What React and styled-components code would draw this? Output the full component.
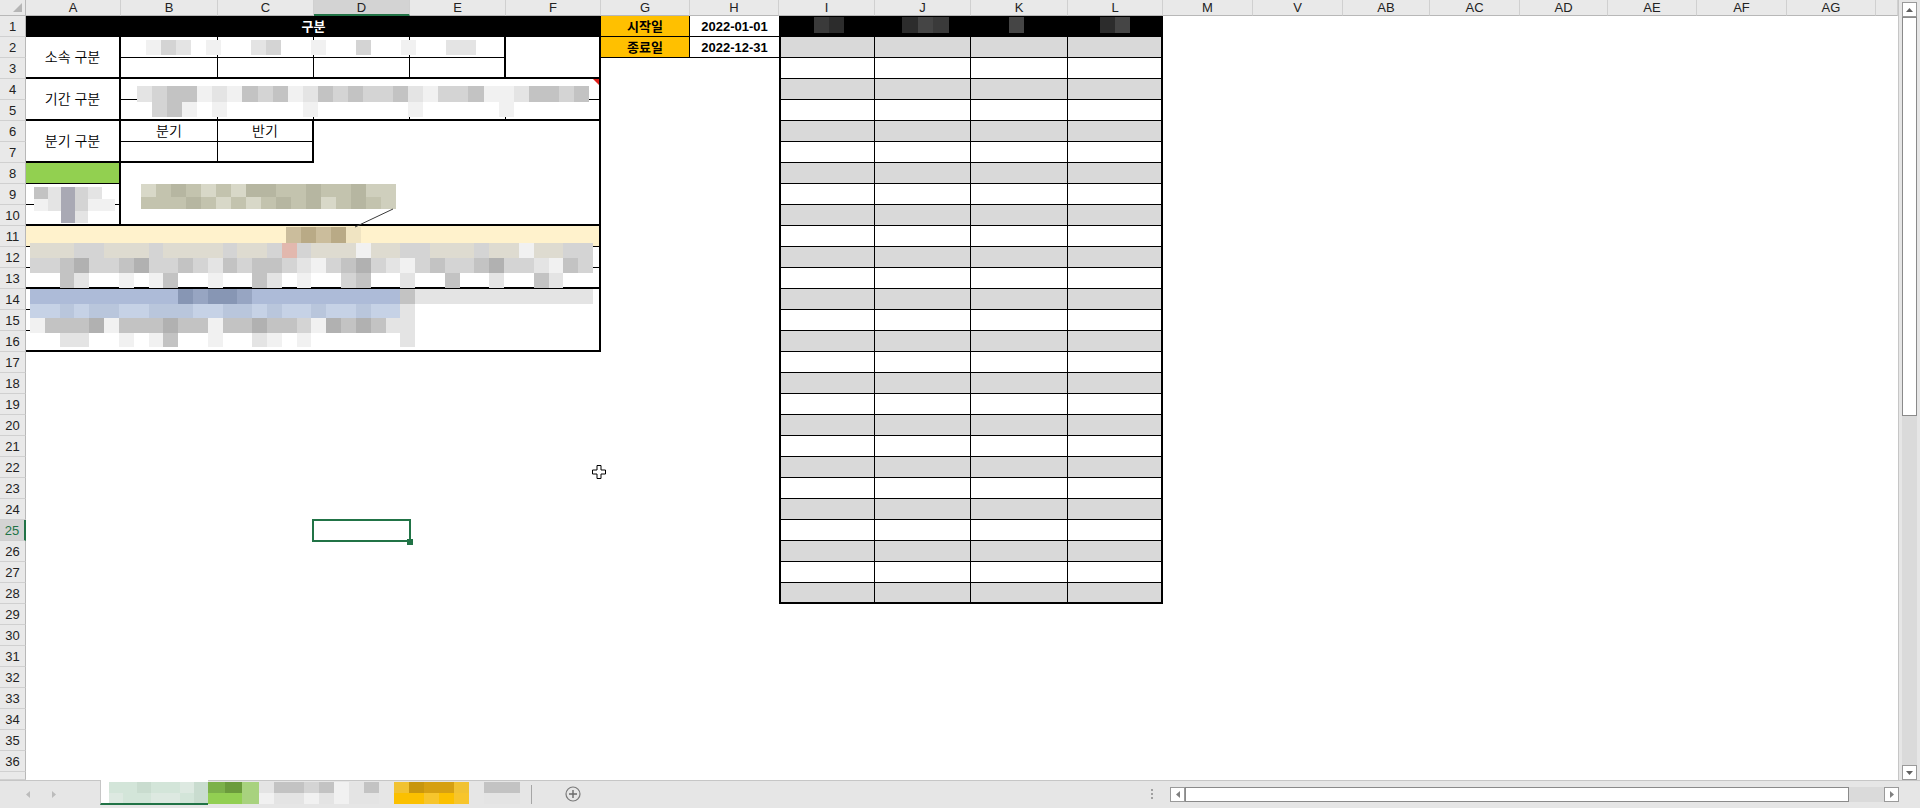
import React from "react";
import styled, { createGlobalStyle } from "styled-components";

const GlobalStyle = createGlobalStyle`
  html, body {
    margin: 0;
    padding: 0;
    background: #fff;
    overflow: hidden;
  }
  body {
    font-family: "Liberation Sans", "Noto Sans CJK KR", sans-serif;
  }
`;

// visible columns, last one is the clipped AH
const COLS = ["A", "B", "C", "D", "E", "F", "G", "H", "I", "J", "K", "L", "M", "V", "AB", "AC", "AD", "AE", "AF", "AG", ""];
const WIDTHS = [95, 97, 96, 96, 96, 95, 89, 89, 96, 96, 97, 95, 90, 90, 87, 90, 88, 89, 90, 89];
const ROWS = 36;

const colIndex = (letter) => COLS.indexOf(letter) + 2;

// "B8:F10" -> grid placement props
const area = (ref) => {
    const [a, b = a] = ref.split(":");
    const parse = (s) => {
        const m = s.match(/^([A-Z]+)(\d+)$/);
        return [colIndex(m[1]), Number(m[2]) + 1];
    };
    const [c1, r1] = parse(a);
    const [c2, r2] = parse(b);
    return { $col: `${c1} / ${c2 + 1}`, $row: `${r1} / ${r2 + 1}` };
};

const PAL = {
    w: "#f1f1f1", l: "#e4e4e4", m: "#d4d4d4", g: "#c3c3c3", d: "#b1b1b1", a: "#a9a9b4",
    e: "#dedbd0", r: "#e2b8ae",
    o: "#cfcfbd", O: "#b6b6a1", p: "#c3c3ae", q: "#d8d8c8",
    t: "#cbbd9c", T: "#b9aa86", y: "#f0e4c2",
    b: "#adbbd8", B: "#8796b4", v: "#97a5c2", c: "#c6d2e6", k: "#b9c6dc",
    x: "#3a3a3a", X: "#2c2c2c", z: "#454545",
    n: "#d3e5d9", N: "#dde9e1", s: "#c9dccf",
    G: "#7cb14a", H: "#6b9b3c", h: "#a8d27e", i: "#92cf52",
    Y: "#f1c232", U: "#c8960e", u: "#d6a012", f: "#fbc000", F: "#f7c52c",
};

const line = (w) => (w ? `${w}px solid #000` : "none");

const Page = styled.div`
    width: 1920px;
    height: 808px;
    display: flex;
    flex-direction: column;
    overflow: hidden;
`;

const Workspace = styled.div`
    display: flex;
    height: 780px;
`;

const Sheet = styled.div`
    flex: 1;
    position: relative;
    display: grid;
    grid-template-columns: 26px ${WIDTHS.map((w) => w + "px").join(" ")} 1fr;
    grid-template-rows: 16px repeat(${ROWS}, 21px) 1fr;
    overflow: hidden;
    background: #fff;
`;

const Corner = styled.div`
    grid-row: 1;
    grid-column: 1;
    position: relative;
    box-sizing: border-box;
    background: #e9e9e9;
    border-right: 1px solid #b8b8b8;
    border-bottom: 1px solid #b8b8b8;
    &::after {
        content: "";
        position: absolute;
        right: 3px;
        bottom: 3px;
        border-left: 9px solid transparent;
        border-bottom: 9px solid #b5b5b5;
    }
`;

const ColHead = styled.div`
    grid-row: 1;
    grid-column: ${(p) => p.$col};
    box-sizing: border-box;
    display: flex;
    align-items: center;
    justify-content: center;
    background: ${(p) => (p.$active ? "#d3d3d3" : "#e9e9e9")};
    border-right: 1px solid #d0d0d0;
    border-bottom: ${(p) => (p.$active ? "2px solid #217346" : "1px solid #b8b8b8")};
    font-size: 13px;
    color: #222;
    overflow: hidden;
`;

const RowHead = styled.div`
    grid-column: 1;
    grid-row: ${(p) => p.$row};
    box-sizing: border-box;
    display: flex;
    align-items: center;
    justify-content: center;
    background: ${(p) => (p.$active ? "#d3d3d3" : "#e9e9e9")};
    border-bottom: 1px solid #d0d0d0;
    border-right: ${(p) => (p.$active ? "2px solid #217346" : "1px solid #b8b8b8")};
    color: ${(p) => (p.$active ? "#217346" : "#222")};
    font-size: 13px;
    overflow: hidden;
`;

const Cell = styled.div`
    grid-column: ${(p) => p.$col};
    grid-row: ${(p) => p.$row};
    position: relative;
    box-sizing: border-box;
    display: flex;
    align-items: center;
    justify-content: center;
    background: ${(p) => p.$bg || "transparent"};
    border-top: ${(p) => line(p.$t)};
    border-right: ${(p) => line(p.$r)};
    border-bottom: ${(p) => line(p.$b)};
    border-left: ${(p) => line(p.$l)};
    font-size: ${(p) => (p.$bold ? 13 : 14)}px;
    line-height: 1;
    font-weight: ${(p) => (p.$bold ? 700 : 350)};
    color: ${(p) => p.$color || "#000"};
    white-space: nowrap;
    overflow: hidden;

    ${(p) => p.$note && `
        &::after {
            content: "";
            position: absolute;
            top: 0;
            right: 0;
            border-left: 6px solid transparent;
            border-top: 6px solid #e0201a;
        }
    `}
`;

const MosaicGrid = styled.div`
    grid-column: ${(p) => p.$col || "auto"};
    grid-row: ${(p) => p.$row || "auto"};
    align-self: start;
    justify-self: start;
    flex-shrink: 0;
    margin: ${(p) => p.$y || 0}px 0 0 ${(p) => p.$x || 0}px;
    width: ${(p) => p.$w}px;
    height: ${(p) => p.$h}px;
    display: grid;
    grid-template-columns: repeat(${(p) => p.$cols}, 1fr);
    grid-template-rows: repeat(${(p) => p.$rows}, 1fr);
    z-index: 2;
    pointer-events: none;
`;

const Block = styled.span`
    background: ${(p) => p.$c};
`;

const CalloutLayer = styled.div`
    grid-column: ${(p) => p.$col};
    grid-row: ${(p) => p.$row};
    z-index: 2;
    pointer-events: none;
    svg {
        display: block;
        overflow: visible;
    }
`;

const Selection = styled.div`
    grid-column: ${(p) => p.$col};
    grid-row: ${(p) => p.$row};
    margin: -1px -1px -1px -2px;
    border: 2px solid #217346;
    position: relative;
    z-index: 3;
`;

const FillHandle = styled.div`
    position: absolute;
    right: -4px;
    bottom: -5px;
    width: 6px;
    height: 6px;
    background: #217346;
`;

const Cursor = styled.svg`
    position: absolute;
    left: 592px;
    top: 465px;
    z-index: 5;
`;

const VScroll = styled.div`
    width: 22px;
    box-sizing: border-box;
    border-left: 1px solid #c6c6c6;
    background: #e6e6e6;
    display: flex;
    flex-direction: column;
    padding: 2px 3px 0 3px;
`;

const ScrollBtn = styled.div`
    flex: 0 0 15px;
    height: 15px;
    width: ${(p) => (p.$h ? "15px" : "auto")};
    box-sizing: border-box;
    background: #fff;
    border: 1px solid #9a9a9a;
    display: flex;
    align-items: center;
    justify-content: center;
`;

const Thumb = styled.div`
    flex: 0 0 ${(p) => p.$size}px;
    box-sizing: border-box;
    background: #fff;
    border: 1px solid #8a8a8a;
`;

const Track = styled.div`
    flex: 1;
    background: #dadada;
`;

const TabBar = styled.div`
    height: 28px;
    box-sizing: border-box;
    display: flex;
    align-items: flex-start;
    background: #e6e6e6;
    border-top: 1px solid #c6c6c6;
`;

const NavArea = styled.div`
    width: 100px;
    height: 27px;
    flex-shrink: 0;
    display: flex;
    align-items: center;
    gap: 22px;
    padding-left: 26px;
    box-sizing: border-box;
`;

const ActiveTab = styled.div`
    width: 108px;
    height: 25px;
    flex-shrink: 0;
    margin-top: -1px;
    box-sizing: border-box;
    background: #fff;
    border-left: 1px solid #c6c6c6;
    border-bottom: 2px solid #217346;
    padding: 2px 0 0 8px;
`;

const TabSep = styled.div`
    width: 1px;
    height: 19px;
    flex-shrink: 0;
    margin: 4px 0 0 11px;
    background: #a6a6a6;
`;

const AddSheet = styled.svg`
    flex-shrink: 0;
    margin: 5px 0 0 33px;
`;

const Spacer = styled.div`
    flex: 1;
`;

const Dots = styled.div`
    width: 2px;
    flex-shrink: 0;
    margin-top: 8px;
    display: flex;
    flex-direction: column;
    gap: 2px;
    span {
        width: 2px;
        height: 2px;
        background: #a0a0a0;
    }
`;

const HScroll = styled.div`
    width: 729px;
    height: 15px;
    flex-shrink: 0;
    margin: 6px 0 0 17px;
    display: flex;
`;

const HCorner = styled.div`
    width: 21px;
    flex-shrink: 0;
`;

function Mosaic({ at, x, y, w, h, rows, cols }) {
    const n = cols || Math.max(...rows.map((r) => r.length));
    const place = at ? area(at) : {};
    return (
        <MosaicGrid {...place} $x={x} $y={y} $w={w} $h={h} $cols={n} $rows={rows.length}>
            {rows.flatMap((r, i) =>
                Array.from({ length: n }, (_, j) => <Block key={i + "-" + j} $c={PAL[r[j]] || "transparent"} />)
            )}
        </MosaicGrid>
    );
}

const CELLS = [
    { at: "A1:F1", bg: "#000", color: "#fff", bold: true, text: "구분" },
    { at: "G1", bg: "#ffc000", bold: true, text: "시작일", r: 1, b: 1 },
    { at: "H1", bold: true, text: "2022-01-01", b: 1 },
    { at: "G2", bg: "#ffc000", bold: true, text: "종료일", r: 1, b: 1 },
    { at: "H2", bold: true, text: "2022-12-31", b: 1 },

    { at: "A2:A3", text: "소속 구분", r: 2, b: 2 },
    { at: "B2", r: 1, b: 1 }, { at: "C2", r: 1, b: 1 }, { at: "D2", r: 1, b: 1 }, { at: "E2", r: 2, b: 1 },
    { at: "B3", r: 1, b: 2 }, { at: "C3", r: 1, b: 2 }, { at: "D3", r: 1, b: 2 }, { at: "E3", r: 2, b: 2 },
    { at: "F2:F3", r: 2, b: 2 },

    { at: "A4:A5", text: "기간 구분", r: 2, b: 2 },
    { at: "B4:E4", b: 1 }, { at: "F4", r: 2, b: 1, note: true },
    { at: "B5", r: 1, b: 2 }, { at: "C5", r: 1, b: 2 }, { at: "D5", r: 1, b: 2 }, { at: "E5", r: 1, b: 2 },
    { at: "F5", r: 2, b: 2 },

    { at: "A6:A7", text: "분기 구분", r: 2, b: 2 },
    { at: "B6", text: "분기", r: 1, b: 1 }, { at: "C6", text: "반기", r: 2, b: 1 },
    { at: "B7", r: 1, b: 2 }, { at: "C7", r: 2, b: 2 },
    { at: "D6:F7", r: 2 },

    { at: "A8", bg: "#92d050", r: 2, b: 1 },
    { at: "A9", r: 2, b: 1 }, { at: "A10", r: 2, b: 2 },
    { at: "B8:F10", r: 2, b: 2 },
    { at: "A11:F11", bg: "#fff2cc", r: 2, b: 1 },
    { at: "A12:F12", r: 2, b: 1 }, { at: "A13:F13", r: 2, b: 2 },
    { at: "A14", b: 1 }, { at: "A15", b: 1 }, { at: "A16", b: 2 },
    { at: "B14:F16", r: 2, b: 2 },
];

["I", "J", "K", "L"].forEach((c, ci) => {
    for (let r = 1; r <= 28; r++) {
        CELLS.push({
            at: `${c}${r}`,
            bg: r === 1 ? "#000" : r % 2 === 0 ? "#d9d9d9" : null,
            l: ci === 0 ? 2 : 0,
            r: ci === 3 ? 2 : 1,
            b: r === 28 ? 2 : 1,
        });
    }
});

const MOSAICS = [
    { at: "B2:E2", x: 25, y: 3, w: 330, h: 15, rows: ["wml w  lm  w  m  w  ll"] },
    {
        at: "B4:F5", x: 16, y: 7, w: 452, h: 31,
        rows: ["lmggwlwgmgwlgmgmmglwmmgwwlggmg", " mgw w     w      w     w     "],
    },
    { at: "A9:A10", x: 8, y: 3, w: 81, h: 36, rows: ["glaml ", "wlamww", "  al  "] },
    { at: "B8:F10", x: 20, y: 21, w: 255, h: 25, rows: ["qpOpqpqOOppOppOoo", "pppOpqpqpOpOqpOpo"] },
    { at: "A11:F11", x: 260, y: 1, w: 75, h: 16, rows: ["tTtTy"] },
    {
        at: "A11:F13", x: 4, y: 17, w: 563, h: 45, cols: 38,
        rows: [
            "eeemmeeemeeeemeemrmeeeweemmeeemeeweemm",
            "mmgdmmgdmmgmlgmggmlwmgdmlwmgmmgdmmlwgm",
            "  gl  w wg  w  gl w  mg  l  g  l  gl  ",
        ],
    },
    {
        at: "A14:F16", x: 4, y: 0, w: 563, h: 58, cols: 38,
        rows: [
            "bbbbbbbbbbBvBBvbbbbbbbbbbgllllllllllll",
            "cckckkcckkkcckkckcckcckccl            ",
            "wgggdwgggdggwggdggmwdgdgll            ",
            "  ll  w wg  w  lw w      l            ",
        ],
    },
    { at: "I1", x: 35, y: 1, w: 30, h: 16, rows: ["xX"] },
    { at: "J1", x: 27, y: 1, w: 47, h: 16, rows: ["Xzx"] },
    { at: "K1", x: 38, y: 1, w: 15, h: 16, rows: ["z"] },
    { at: "L1", x: 32, y: 1, w: 30, h: 16, rows: ["Xz"] },
];

const Arrow = ({ dir, color = "#606060" }) => {
    const d = {
        up: "M0 4 L3.5 0 L7 4 Z",
        down: "M0 0 L7 0 L3.5 4 Z",
        left: "M4 0 L4 7 L0 3.5 Z",
        right: "M0 0 L4 3.5 L0 7 Z",
    }[dir];
    const vertical = dir === "up" || dir === "down";
    return (
        <svg width={vertical ? 7 : 4} height={vertical ? 4 : 7}>
            <path d={d} fill={color} />
        </svg>
    );
};

const App = () => {
    return (
        <>
            <GlobalStyle />
            <Page>
                <Workspace>
                    <Sheet>
                        <Corner />
                        {COLS.map((c, i) => (
                            <ColHead key={"h" + i} $col={i + 2} $active={c === "D"}>{c}</ColHead>
                        ))}
                        {Array.from({ length: ROWS + 1 }, (_, i) => (
                            <RowHead key={"r" + i} $row={i + 2} $active={i + 1 === 25}>
                                {i < ROWS ? i + 1 : ""}
                            </RowHead>
                        ))}

                        {CELLS.map((c, i) => (
                            <Cell
                                key={"c" + i}
                                {...area(c.at)}
                                $bg={c.bg}
                                $color={c.color}
                                $bold={c.bold}
                                $t={c.t}
                                $r={c.r}
                                $b={c.b}
                                $l={c.l}
                                $note={c.note}
                            >
                                {c.text}
                            </Cell>
                        ))}

                        {MOSAICS.map((m, i) => (
                            <Mosaic key={"m" + i} {...m} />
                        ))}

                        <CalloutLayer {...area("B8:F11")}>
                            <svg width="480" height="84">
                                <line x1="272" y1="46" x2="234" y2="64" stroke="#3a3a3a" strokeWidth="1" />
                            </svg>
                        </CalloutLayer>

                        <Selection {...area("D25")}>
                            <FillHandle />
                        </Selection>

                        <Cursor width="14" height="14" viewBox="0 0 14 14">
                            <path
                                d="M5 0.5h4v4.5h4.5v4h-4.5v4.5h-4v-4.5h-4.5v-4h4.5z"
                                fill="#fff"
                                stroke="#000"
                                strokeWidth="1"
                            />
                        </Cursor>
                    </Sheet>

                    <VScroll>
                        <ScrollBtn><Arrow dir="up" /></ScrollBtn>
                        <Thumb $size={399} />
                        <Track />
                        <ScrollBtn><Arrow dir="down" /></ScrollBtn>
                    </VScroll>
                </Workspace>

                <TabBar>
                    <NavArea>
                        <Arrow dir="left" color="#bcbcbc" />
                        <Arrow dir="right" color="#bcbcbc" />
                    </NavArea>
                    <ActiveTab>
                        <Mosaic w={99} h={21} rows={["nnsnnNs", "NnnNNns"]} />
                    </ActiveTab>
                    <Mosaic y={1} w={51} h={22} rows={["GHh", "iih"]} />
                    <Mosaic y={1} w={120} h={22} rows={["lggmgwlg", "wllwlwll"]} />
                    <Mosaic x={15} y={1} w={75} h={22} rows={["YUuuY", "ffFfF"]} />
                    <Mosaic x={15} y={1} w={36} h={22} rows={["gg", "ll"]} />
                    <TabSep />
                    <AddSheet width="16" height="16" viewBox="0 0 16 16">
                        <circle cx="8" cy="8" r="7" fill="none" stroke="#7a7a7a" strokeWidth="1.2" />
                        <path d="M8 4v8M4 8h8" stroke="#6a6a6a" strokeWidth="1.4" />
                    </AddSheet>
                    <Spacer />
                    <Dots><span /><span /><span /></Dots>
                    <HScroll>
                        <ScrollBtn $h><Arrow dir="left" color="#808080" /></ScrollBtn>
                        <Thumb $size={664} />
                        <Track />
                        <ScrollBtn $h><Arrow dir="right" color="#808080" /></ScrollBtn>
                    </HScroll>
                    <HCorner />
                </TabBar>
            </Page>
        </>
    );
};

export default App;
